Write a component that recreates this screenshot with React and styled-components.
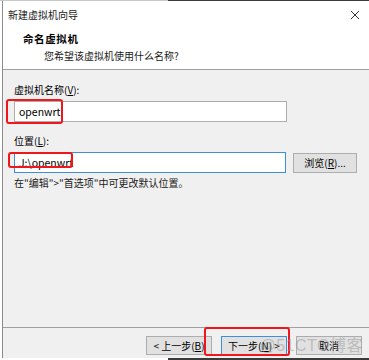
import styled, { createGlobalStyle } from "styled-components";

const GlobalStyle = createGlobalStyle`
  html, body {
    margin: 0;
    padding: 0;
    background: #ffffff;
  }
  body {
    font-family: "Segoe UI", "Noto Sans CJK SC", "Noto Sans", sans-serif;
    font-size: 10px;
    color: #000;
  }
`;

const Page = styled.div`
  width: 369px;
  height: 360px;
  display: flex;
  flex-direction: column;
  overflow: hidden;
  position: relative;
`;

// 화면 위/아래 가장자리 (뒤쪽 창의 어두운 띠)
const Edge = styled.div`
  display: flex;
  height: ${(p) => p.$h}px;
  flex-shrink: 0;
`;

const EdgePart = styled.div`
  width: ${(p) => (p.$w ? `${p.$w}px` : "auto")};
  flex: ${(p) => (p.$w ? "none" : "1")};
  background: ${(p) => p.$color};
`;

const Window = styled.div`
  flex: 1;
  margin-left: 2px;
  border-left: 1px solid #8c8c8c;
  display: flex;
  flex-direction: column;
  min-height: 0;
`;

const TitleBar = styled.div`
  height: 27px;
  display: flex;
  align-items: center;
  justify-content: space-between;
  padding: 0 9px 0 5px;
  background: #fff;
  font-size: 10px;
  color: #1a1a1a;
`;

const Header = styled.div`
  height: 42px;
  background: #fff;
  border-bottom: 1px solid #a0a0a0;
  padding: 4px 0 0 20px;
  box-sizing: border-box;
  display: flex;
  flex-direction: column;
  gap: 3px;
`;

const HeaderTitle = styled.div`
  font-weight: bold;
  font-size: 10.5px;
  letter-spacing: 0.6px;
  line-height: 14px;
`;

const HeaderSub = styled.div`
  padding-left: 21px;
  line-height: 14px;
  color: #1a1a1a;
`;

const Body = styled.div`
  flex: 1;
  background: #f0f0f0;
  padding: 13px 12px 0 11px;
  display: flex;
  flex-direction: column;
`;

const Label = styled.div`
  line-height: 14px;
  margin-bottom: 4px;
`;

const Row = styled.div`
  display: flex;
  align-items: center;
  gap: 7px;
  margin-bottom: ${(p) => p.$mb || 0}px;
`;

const InputWrap = styled.div`
  position: relative;
  width: 273px;
`;

const Input = styled.div`
  height: 21px;
  box-sizing: border-box;
  background: #fff;
  border: 1px solid ${(p) => (p.$focus ? "#3c8fd8" : "#adadad")};
  padding: 0 4px;
  display: flex;
  align-items: center;
  font-size: 10.5px;
`;

const RedBox = styled.div`
  position: absolute;
  left: ${(p) => p.$l}px;
  top: ${(p) => p.$t}px;
  width: ${(p) => p.$w}px;
  height: ${(p) => p.$h}px;
  border: 2px solid #f0171c;
  border-radius: 3px;
  box-sizing: border-box;
  pointer-events: none;
`;

const Button = styled.div`
  width: ${(p) => p.$w || 66}px;
  height: ${(p) => p.$h || 19}px;
  box-sizing: border-box;
  border: 1px solid ${(p) => (p.$primary ? "#3c8fd8" : "#adadad")};
  background: #e1e1e1;
  display: flex;
  align-items: center;
  justify-content: center;
  font-size: 10px;
  white-space: nowrap;
`;

const U = styled.span`
  text-decoration: underline;
`;

const Hint = styled.div`
  line-height: 14px;
  margin-top: 3px;
  color: #1a1a1a;
`;

const Footer = styled.div`
  height: 31px;
  background: #f0f0f0;
  border-top: 1px solid #a0a0a0;
  display: flex;
  justify-content: flex-end;
  align-items: flex-start;
  padding: 8px 7px 0 0;
  gap: 9px;
  box-sizing: border-box;
  position: relative;
`;

// 스크린샷 위에 찍힌 워터마크
const Watermark = styled.div`
  position: absolute;
  right: 6px;
  top: 8px;
  font-family: "Liberation Sans", "Noto Sans CJK SC", sans-serif;
  font-size: 16px;
  line-height: 20px;
  color: rgba(150, 150, 150, 0.5);
  pointer-events: none;
  letter-spacing: 0.5px;
`;

const CloseIcon = () => (
  <svg width="10" height="10" viewBox="0 0 10 10">
    <path d="M1 1 L9 9 M9 1 L1 9" stroke="#333" strokeWidth="1" fill="none" />
  </svg>
);

const App = () => {
  return (
    <>
      <GlobalStyle />
      <Page>
        <Edge $h={1}>
          <EdgePart $w={168} $color="#c8c8c8" />
          <EdgePart $color="#3b3b3b" />
        </Edge>
        <Window>
          <TitleBar>
            <span>新建虚拟机向导</span>
            <CloseIcon />
          </TitleBar>
          <Header>
            <HeaderTitle>命名虚拟机</HeaderTitle>
            <HeaderSub>您希望该虚拟机使用什么名称?</HeaderSub>
          </Header>
          <Body>
            <Label>
              虚拟机名称(<U>V</U>):
            </Label>
            <Row $mb={12}>
              <InputWrap>
                <Input>openwrt</Input>
                <RedBox $l={-8} $t={-2} $w={57} $h={25} />
              </InputWrap>
            </Row>
            <Label>
              位置(<U>L</U>):
            </Label>
            <Row>
              <InputWrap>
                <Input $focus>J:\openwrt</Input>
                <RedBox $l={-6} $t={0} $w={65} $h={16} />
              </InputWrap>
              <Button $w={64} $h={20}>
                浏览(<U>R</U>)...
              </Button>
            </Row>
            <Hint>在"编辑"&gt;"首选项"中可更改默认位置。</Hint>
          </Body>
          <Footer>
            <Button>
              &lt; 上一步(<U>B</U>)
            </Button>
            <Button $primary>
              下一步(<U>N</U>) &gt;
            </Button>
            <Button>取消</Button>
            <RedBox $l={201} $t={-1} $w={86} $h={29} />
            <Watermark>@51CTO博客</Watermark>
          </Footer>
        </Window>
        <Edge $h={2}>
          <EdgePart $w={168} $color="#ffffff" />
          <EdgePart $color="#3b3b3b" />
        </Edge>
      </Page>
    </>
  );
};

export default App;
